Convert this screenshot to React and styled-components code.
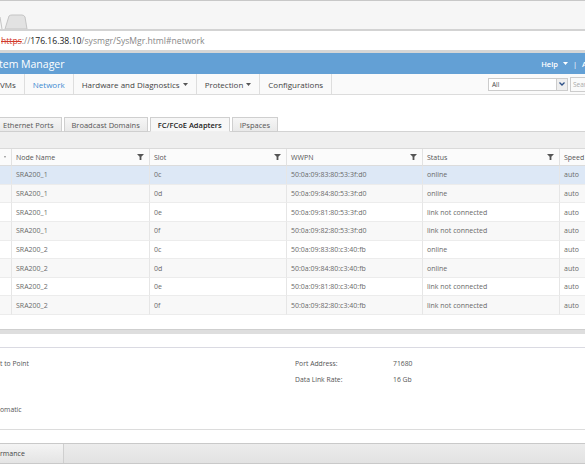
import React from 'react';
import styled, { createGlobalStyle } from 'styled-components';

const GlobalStyle = createGlobalStyle`
  html, body {
    margin: 0;
    padding: 0;
    background: #fff;
  }
  body {
    font-family: "Open Sans", "Liberation Sans", sans-serif;
    color: #555;
  }
`;

const rows = [
  { node: 'SRA200_1', slot: '0c', wwpn: '50:0a:09:83:80:53:3f:d0', status: 'online', speed: 'auto' },
  { node: 'SRA200_1', slot: '0d', wwpn: '50:0a:09:84:80:53:3f:d0', status: 'online', speed: 'auto' },
  { node: 'SRA200_1', slot: '0e', wwpn: '50:0a:09:81:80:53:3f:d0', status: 'link not connected', speed: 'auto' },
  { node: 'SRA200_1', slot: '0f', wwpn: '50:0a:09:82:80:53:3f:d0', status: 'link not connected', speed: 'auto' },
  { node: 'SRA200_2', slot: '0c', wwpn: '50:0a:09:83:80:c3:40:fb', status: 'online', speed: 'auto' },
  { node: 'SRA200_2', slot: '0d', wwpn: '50:0a:09:84:80:c3:40:fb', status: 'online', speed: 'auto' },
  { node: 'SRA200_2', slot: '0e', wwpn: '50:0a:09:81:80:c3:40:fb', status: 'link not connected', speed: 'auto' },
  { node: 'SRA200_2', slot: '0f', wwpn: '50:0a:09:82:80:c3:40:fb', status: 'link not connected', speed: 'auto' },
];

const columns = ['', 'Node Name', 'Slot', 'WWPN', 'Status', 'Speed'];

const Filter = () => (
  <svg width="7" height="6" viewBox="0 0 7 6">
    <path d="M0 0H7L4.4 2.8V6H2.6V2.8Z" fill="#555" />
  </svg>
);

const Caret = ({ color = '#555' }) => (
  <svg width="5" height="3" viewBox="0 0 5 3">
    <path d="M0 0H5L2.5 3Z" fill={color} />
  </svg>
);

const Page = styled.div`
  width: 585px;
  height: 470px;
  overflow: hidden;
  display: flex;
  flex-direction: column;
`;

/* browser chrome */
const TabStrip = styled.div`
  height: 28px;
  border-top: 1px solid #c8c8c8;
  border-bottom: 2px solid #d3d3d3;
  background: #f6f6f6;
  display: flex;
  align-items: flex-end;
  flex-shrink: 0;
`;

const AddressBar = styled.div`
  height: 19px;
  border-bottom: 3px solid #d6d6d6;
  background: #fff;
  display: flex;
  align-items: center;
  font-size: 8.6px;
  color: #888;
  white-space: nowrap;
  flex-shrink: 0;
`;

const Scheme = styled.span`
  color: #d23a2a;
  text-decoration: line-through;
  margin-left: 1px;
`;

const Host = styled.span`
  color: #222;
`;

/* app header */
const Header = styled.div`
  height: 21px;
  background: #63a0d5;
  color: #fff;
  display: flex;
  align-items: center;
  white-space: nowrap;
  flex-shrink: 0;
`;

const Title = styled.div`
  font-size: 10.5px;
  margin-left: -1px;
`;

const HeaderRight = styled.div`
  margin-left: auto;
  display: flex;
  align-items: center;
  gap: 5px;
  font-size: 7.5px;
  font-weight: 600;
  margin-right: -2px;
`;

const NavBar = styled.div`
  height: 20px;
  border-bottom: 1px solid #dcdcdc;
  background: #fafafa;
  display: flex;
  align-items: stretch;
  white-space: nowrap;
  flex-shrink: 0;
`;

const NavItem = styled.div`
  display: flex;
  align-items: center;
  gap: 3px;
  padding: 0 8px;
  font-size: 8px;
  color: ${p => (p.$active ? '#3e8ad1' : '#444')};
  border-right: 1px solid #dedede;
  &:first-child {
    padding-left: 0;
  }
`;

const NavRight = styled.div`
  margin-left: auto;
  display: flex;
  align-items: center;
  gap: 2px;
`;

const Select = styled.div`
  width: 80px;
  height: 13px;
  border: 1px solid #ccc;
  background: #fff;
  display: flex;
  align-items: center;
  font-size: 6.5px;
  color: #444;
  padding-left: 3px;
  box-sizing: border-box;
`;

const SelectButton = styled.div`
  margin-left: auto;
  width: 10px;
  height: 100%;
  border-left: 1px solid #ccc;
  background: #eee;
  display: flex;
  align-items: center;
  justify-content: center;
`;

const Search = styled.div`
  width: 12px;
  height: 13px;
  border: 1px solid #ccc;
  border-right: none;
  padding-left: 2px;
  font-size: 6.5px;
  color: #aaa;
  overflow: hidden;
  display: flex;
  align-items: center;
`;

/* content */
const Spacer = styled.div`
  height: ${p => p.$h}px;
  flex-shrink: 0;
  background: #fff;
`;

const Tabs = styled.div`
  height: 16px;
  display: flex;
  align-items: flex-end;
  gap: 2px;
  flex-shrink: 0;
  border-bottom: 1px solid #d3d3d3;
`;

const Tab = styled.div`
  height: 15px;
  padding: 0 7px;
  margin-bottom: -1px;
  display: flex;
  align-items: center;
  font-size: 7.5px;
  white-space: nowrap;
  border: 1px solid #cfcfcf;
  border-bottom: ${p => (p.$active ? '1px solid #f0f0f0' : '1px solid #cfcfcf')};
  background: ${p => (p.$active ? '#f7f7f7' : 'linear-gradient(#f6f6f6, #e9e9e9)')};
  color: ${p => (p.$active ? '#222' : '#555')};
  font-weight: ${p => (p.$active ? 600 : 400)};
  box-sizing: border-box;
  &:first-child {
    border-left: none;
    padding-left: 3px;
  }
`;

const Toolbar = styled.div`
  height: 16px;
  background: #efefef;
  border-bottom: 1px solid #dadada;
  flex-shrink: 0;
`;

const Grid = styled.div`
  display: grid;
  grid-template-columns: 12px 138px 137px 136px 137px 137px;
  width: 697px;
  flex-shrink: 0;
`;

const HeadCell = styled.div`
  height: 16px;
  border-bottom: 1px solid #dcdcdc;
  border-right: 1px solid #e2e2e2;
  background: #fbfbfb;
  display: flex;
  align-items: center;
  padding: 0 5px 0 4px;
  font-size: 7px;
  color: #555;
  white-space: nowrap;
  span {
    flex: 1;
  }
`;

const Cell = styled.div`
  height: 18.65px;
  box-sizing: border-box;
  border-bottom: 1px solid #ececec;
  border-right: 1px solid #e6e6e6;
  background: ${p => (p.$selected ? '#dde8f6' : p.$odd ? '#f8f8f8' : '#fff')};
  display: flex;
  align-items: center;
  padding-left: 4px;
  font-size: 7px;
  color: #6a6a6a;
  white-space: nowrap;
`;

const Splitter = styled.div`
  height: 4px;
  border-top: 1px solid #cfcfcf;
  background: #dedede;
  flex-shrink: 0;
`;

const Details = styled.div`
  height: 95px;
  border-bottom: 1px solid #dcdcdc;
  flex-shrink: 0;
  display: flex;
  flex-direction: column;
`;

const DetailsHead = styled.div`
  height: 13px;
  border-bottom: 1px solid #dadae2;
`;

const DetailsBody = styled.div`
  display: flex;
  padding-top: 8px;
`;

const DetailsCol = styled.div`
  width: ${p => p.$w}px;
  display: flex;
  flex-direction: column;
`;

const Field = styled.div`
  height: 15.3px;
  display: flex;
  align-items: center;
  font-size: 6.8px;
  color: #555;
  white-space: nowrap;
`;

const Label = styled.div`
  width: 98px;
`;

const BottomBar = styled.div`
  height: 19px;
  border-top: 1px solid #c9c9c9;
  border-bottom: 1px solid #c9c9c9;
  background: linear-gradient(#ececec, #e2e2e2);
  display: flex;
  flex-shrink: 0;
`;

const BottomTab = styled.div`
  width: 63px;
  display: flex;
  align-items: center;
  font-size: 7px;
  color: #444;
  background: linear-gradient(#f4f4f4, #e4e4e4);
  border-right: 1px solid #cfcfcf;
`;

export default function App() {
  return (
    <>
      <GlobalStyle />
      <Page>
        <TabStrip>
          <svg width="30" height="15" viewBox="0 0 30 15">
            <path d="M0 3L2 15" stroke="#c4c4c4" fill="none" />
            <path d="M5 15L9 2Q10 1 12 1H22Q24 1 25 3L27 15Z" fill="#e2e2e2" stroke="#c4c4c4" />
          </svg>
        </TabStrip>
        <AddressBar>
          <Scheme>https</Scheme>://<Host>176.16.38.10</Host>/sysmgr/SysMgr.html#network
        </AddressBar>
        <Header>
          <Title>tem Manager</Title>
          <HeaderRight>
            <span>Help</span>
            <Caret color="#fff" />
            <span style={{ fontWeight: 400 }}>|</span>
            <span>A</span>
          </HeaderRight>
        </Header>
        <NavBar>
          <NavItem>VMs</NavItem>
          <NavItem $active>Network</NavItem>
          <NavItem>Hardware and Diagnostics <Caret /></NavItem>
          <NavItem>Protection <Caret /></NavItem>
          <NavItem>Configurations</NavItem>
          <NavRight>
            <Select>
              All
              <SelectButton>
                <svg width="6" height="4" viewBox="0 0 6 4">
                  <path d="M0.5 0.5L3 3L5.5 0.5" stroke="#2c4f86" strokeWidth="1.3" fill="none" />
                </svg>
              </SelectButton>
            </Select>
            <Search>Search</Search>
          </NavRight>
        </NavBar>
        <Spacer $h={20} />
        <Tabs>
          <Tab>Ethernet Ports</Tab>
          <Tab>Broadcast Domains</Tab>
          <Tab $active>FC/FCoE Adapters</Tab>
          <Tab>IPspaces</Tab>
        </Tabs>
        <Toolbar />
        <Grid>
          {columns.map((c, i) => (
            <HeadCell key={i}>
              <span>{c}</span>
              {i < 5 && <Filter />}
            </HeadCell>
          ))}
          {rows.map((r, i) => (
            <React.Fragment key={i}>
              {['', r.node, r.slot, r.wwpn, r.status, r.speed].map((v, j) => (
                <Cell key={j} $selected={i === 0} $odd={i % 2 === 1}>{v}</Cell>
              ))}
            </React.Fragment>
          ))}
        </Grid>
        <Spacer $h={14} />
        <Splitter />
        <Details>
          <DetailsHead />
          <DetailsBody>
            <DetailsCol $w={295}>
              <Field>t to Point</Field>
              <Field />
              <Field />
              <Field>omatic</Field>
            </DetailsCol>
            <DetailsCol $w={290}>
              <Field><Label>Port Address:</Label>71680</Field>
              <Field><Label>Data Link Rate:</Label>16 Gb</Field>
            </DetailsCol>
          </DetailsBody>
        </Details>
        <Spacer $h={13} />
        <BottomBar>
          <BottomTab>rmance</BottomTab>
        </BottomBar>
      </Page>
    </>
  );
}
